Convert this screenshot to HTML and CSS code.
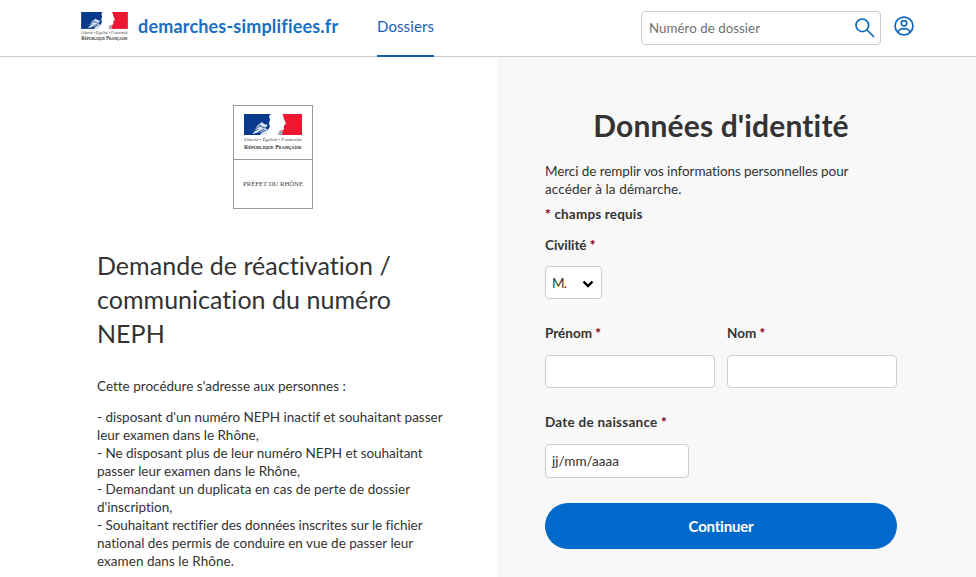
FILE: index.html
```
<!DOCTYPE html>
<html lang="fr">
<head>
<meta charset="utf-8">
<title>demarches-simplifiees.fr</title>
<link rel="stylesheet" href="styles.css">
</head>
<body>
<header class="header">
  <a class="brand">
    <svg class="brand-logo" viewBox="0 0 58 36">
      <rect width="29" height="21" fill="#073a8c"/>
      <rect x="36" width="22" height="21" fill="#ed1730"/>
      <path d="M27 0h11c2 1 1 3 2 5l2 5-2 1v4c-1 2-3 1-4 2l-1 4H20l4-5 2-4-1-2 1-5-1-3z" fill="#fff"/>
      <path d="M13 12l5-4 2 2 4 1-3 3 3 2-2 5h-6l2-3-5 1-5 1 3-3 5-2-5 1z" fill="#dbe4f1"/>
      <path d="M7 17l6-3 4-3m-4 8l7-4m-4-3l5 2m-5 5l6-3" fill="none" stroke="#234f9b" stroke-width="1"/>
      <path d="M35 17l4-1-1 5h-4z" fill="#aaa5b4"/>
      <text x="0" y="26.8" class="motto" textLength="57.5" lengthAdjust="spacingAndGlyphs">Liberté • Égalité • Fraternité</text>
      <text x="0" y="34.5" class="republic" textLength="57.5" lengthAdjust="spacingAndGlyphs">République Française</text>
    </svg>
    <span>demarches-simplifiees.fr</span>
  </a>
  <nav class="nav"><a class="tab">Dossiers</a></nav>
  <div class="search">
    <span class="search-text">Numéro de dossier</span>
    <svg class="search-icon" viewBox="0 0 20 20"><circle cx="7.3" cy="7.3" r="6.3"/><path d="M12 12l7 7"/></svg>
  </div>
  <svg class="account" viewBox="0 0 20 20"><circle cx="10" cy="10" r="8.9"/><circle cx="10" cy="7.3" r="2.7"/><path d="M4 16.5c0-2.4 2.8-3.8 6-3.8s6 1.400 6 3.800"/></svg>
</header>

<main class="columns">
  <section class="procedure">
    <div class="logo">
      <div class="logo-top">
        <svg class="logo-flag" viewBox="0 0 58 36">
          <rect width="29" height="21" fill="#073a8c"/>
          <rect x="36" width="22" height="21" fill="#ed1730"/>
          <path d="M27 0h11c2 1 1 3 2 5l2 5-2 1v4c-1 2-3 1-4 2l-1 4H20l4-5 2-4-1-2 1-5-1-3z" fill="#fff"/>
          <path d="M13 12l5-4 2 2 4 1-3 3 3 2-2 5h-6l2-3-5 1-5 1 3-3 5-2-5 1z" fill="#dbe4f1"/>
          <path d="M7 17l6-3 4-3m-4 8l7-4m-4-3l5 2m-5 5l6-3" fill="none" stroke="#234f9b" stroke-width="1"/>
          <path d="M35 17l4-1-1 5h-4z" fill="#aaa5b4"/>
          <text x="0" y="26.8" class="motto" textLength="57.5" lengthAdjust="spacingAndGlyphs">Liberté • Égalité • Fraternité</text>
          <text x="0" y="34.5" class="republic" textLength="57.5" lengthAdjust="spacingAndGlyphs">République Française</text>
        </svg>
      </div>
      <div class="logo-bottom"><svg width="60" height="10"><text x="0" y="7.1" textLength="60" lengthAdjust="spacingAndGlyphs">PRÉFET DU RHÔNE</text></svg></div>
    </div>
    <h2 class="title">Demande de réactivation /<br>communication du numéro<br>NEPH</h2>
    <p class="text">Cette procédure s'adresse aux personnes :</p>
    <p class="text">- disposant d'un numéro NEPH inactif et souhaitant passer<br>leur examen dans le Rhône,<br><span class="tight">- Ne disposant plus de leur numéro NEPH et souhaitant</span><br>passer leur examen dans le Rhône,<br><span class="wide">- Demandant un duplicata en cas de perte de dossier</span><br>d'inscription,<br><span class="tight">- Souhaitant rectifier des données inscrites sur le fichier</span><br>national des permis de conduire en vue de passer leur<br><span class="wide">examen dans le Rhône.</span></p>
  </section>

  <section class="identity">
    <h1 class="heading">Données d'identité</h1>
    <p class="intro"><span class="intro-line">Merci de remplir vos informations personnelles pour</span><br><span class="intro-end">accéder à la démarche.</span></p>
    <p class="required"><b>*</b> champs requis</p>
    <div class="label civility">Civilité <b>*</b></div>
    <div class="input select"><span>M.</span><svg viewBox="0 0 12 8"><path d="M1.5 1.5L6 6l4.5-4.5"/></svg></div>
    <div class="names">
      <div><div class="label">Prénom <b>*</b></div><div class="input"></div></div>
      <div><div class="label">Nom <b>*</b></div><div class="input"></div></div>
    </div>
    <div class="label birth">Date de naissance <b>*</b></div>
    <div class="input date">jj/mm/aaaa</div>
    <button class="button">Continuer</button>
  </section>
</main>
</body>
</html>
```
FILE: styles.css
```
* { box-sizing: border-box; }
body { margin: 0; height: 577px; overflow: hidden; background: #fff; color: #333; font: 13.5px/18px Lato, "Liberation Sans", sans-serif; font-variant-ligatures: none; }
p, h1, h2 { margin: 0; }
svg { overflow: visible; }

.header { display: flex; height: 57px; padding-left: 81px; border-bottom: 1px solid #ccc; }
.brand { display: flex; width: 296px; color: #176ec2; font-size: 18px; font-weight: 700; line-height: 53px; letter-spacing: .18px; }
.brand-logo { flex: none; width: 47px; height: 29px; margin: 12px 10px 0 0; }
.motto { font: italic 4.6px "Liberation Serif", serif; fill: #444; letter-spacing: 0; }
.republic { font: 6.8px "Liberation Serif", serif; font-variant-caps: small-caps; fill: #222; letter-spacing: 0; stroke: #222; stroke-width: .12px; }
.nav { width: 264px; }
.tab { display: block; width: 57px; height: 57px; border-bottom: 2px solid #1a5fa6; color: #1c5fb0; font-size: 15px; line-height: 53px; letter-spacing: .1px; }
.search { display: flex; justify-content: space-between; width: 240px; height: 34px; margin-top: 11px; padding: 0 5px 0 7px; border: 1px solid #ccc; border-radius: 4px; }
.search-text { color: #707070; font-size: 13.3px; line-height: 33px; letter-spacing: .04px; }
.search-icon { width: 20px; height: 20px; margin-top: 6px; }
.account { width: 20px; height: 20px; margin: 15.5px 0 0 12.5px; }
.search-icon, .account { fill: none; stroke: #0f67bb; stroke-width: 1.7; }

.columns { display: grid; grid-template-columns: 497px 1fr; height: 520px; }
.procedure { padding: 48px 0 0 97px; }
.logo { width: 80px; height: 104px; margin-left: 136px; border: 1px solid #999; }
.logo-top { height: 54px; padding: 8px 10px 0; border-bottom: 1px solid #999; }
.logo-flag { display: block; width: 58px; height: 36px; }
.logo-bottom { display: flex; align-items: center; justify-content: center; height: 47px; }
.logo-bottom text { font: 7px "Liberation Serif", serif; fill: #444; }
.title { margin: 39px 0 27px; font-size: 25px; font-weight: 400; line-height: 34px; letter-spacing: .03px; }
.text { margin-bottom: 13px; white-space: nowrap; }
.tight { letter-spacing: -.04px; }
.wide { letter-spacing: .045px; }

.identity { padding: 49px 79px 0 48px; background: #f8f8f8; }
.heading { font-size: 30px; font-weight: 700; line-height: 38px; letter-spacing: .15px; text-align: center; }
.intro { margin-top: 18px; white-space: nowrap; }
.intro-line { letter-spacing: -.08px; }
.intro-end { letter-spacing: .11px; }
.required { margin-top: 7px; font-weight: 700; letter-spacing: .18px; }
.label { font-weight: 700; }
b { color: #8d0020; }
.civility { margin: 13px 0 12px; letter-spacing: -.05px; }
.input { height: 33px; padding: 0 6px; border: 1px solid #ccc; border-radius: 4px; background: #fff; line-height: 33px; }
.select { display: flex; align-items: center; justify-content: space-between; width: 57px; padding-right: 7px; }
.select span { padding-top: 2px; letter-spacing: -.8px; }
.select svg { width: 12px; height: 8px; margin-top: 2px; fill: none; stroke: #000; stroke-width: 2.4; }
.names { display: grid; grid-template-columns: 170px 170px; gap: 12px; margin-top: 25px; }
.names .input { margin-top: 13px; }
.birth { margin: 25px 0 13px; letter-spacing: .25px; }
.date { width: 144px; height: 34px; letter-spacing: .02px; }
.button { display: block; width: 352px; height: 46px; margin-top: 25px; padding: 0; border: 0; border-radius: 23px; background: #0069cc; color: #fff; font: 700 15px/45px Lato, sans-serif; letter-spacing: -.21px; }
```
